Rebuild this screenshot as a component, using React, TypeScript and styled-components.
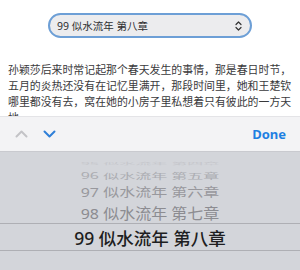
import React from "react";
import styled, { createGlobalStyle } from "styled-components";

const Global = createGlobalStyle`
  html, body { margin: 0; padding: 0; background: #ffffff; }
  body { font-family: "Noto Sans", "Noto Sans CJK SC", sans-serif; }
`;

const Page = styled.div`
  width: 300px;
  height: 270px;
  display: flex;
  flex-direction: column;
  overflow: hidden;
`;

const Content = styled.div`
  flex: 1;
  min-height: 0;
  overflow: hidden;
  padding: 13px 8px 0;
  display: flex;
  flex-direction: column;
  align-items: center;
`;

const SelectBox = styled.div`
  flex: none;
  box-sizing: border-box;
  width: 204px;
  height: 25px;
  border-radius: 13px;
  border: 2.5px solid #6d9fd6;
  background: #ececee;
  display: flex;
  align-items: center;
  justify-content: space-between;
  padding: 0 8px 0 7px;
  font-family: "Noto Sans", "Noto Sans CJK SC", sans-serif;
  font-size: 10.5px;
  color: #2e2e30;
`;

const Paragraph = styled.p`
  flex: none;
  margin: 23px 0 0;
  width: 284px;
  font-size: 10.9px;
  line-height: 16px;
  color: #3a3a3c;
  font-family: "Noto Sans CJK SC", sans-serif;
  text-spacing-trim: space-all;
`;

const Toolbar = styled.div`
  flex: none;
  height: 34px;
  background: #f3f3f5;
  border-top: 1px solid #e4e4e7;
  border-bottom: 1px solid #c9cacf;
  display: flex;
  align-items: center;
  padding: 0 14px 0 15px;
`;

const Arrows = styled.div`
  display: flex;
  align-items: center;
  gap: 15px;
`;

const Done = styled.span`
  margin-left: auto;
  font-family: "Noto Sans", sans-serif;
  font-weight: 700;
  font-size: 13px;
  color: #1e80e2;
`;

const Picker = styled.div`
  flex: none;
  height: 118px;
  background: #d3d5da;
  display: flex;
  flex-direction: column;
  padding-top: 6px;
  box-sizing: border-box;
`;

const Item = styled.div<{ $h: number; $sy: number; $color: string }>`
  flex: none;
  height: ${(p) => p.$h}px;
  display: flex;
  align-items: center;
  justify-content: center;
  font-family: "Noto Sans", "Noto Sans CJK SC", sans-serif;
  font-size: 16px;
  color: ${(p) => p.$color};
  white-space: nowrap;
  & > span {
    display: inline-block;
    transform: scaleY(${(p) => p.$sy});
  }
`;

const Selected = styled.div`
  flex: none;
  height: 28px;
  box-sizing: border-box;
  border-top: 1px solid #aeafb4;
  border-bottom: 1px solid #aeafb4;
  display: flex;
  align-items: center;
  justify-content: center;
  font-family: "Noto Sans", "Noto Sans CJK SC", sans-serif;
  font-size: 17.5px;
  font-weight: 500;
  color: #1e1e21;
`;

const Chevron = ({ up, color }: { up?: boolean; color: string }) => (
  <svg width="13" height="8" viewBox="0 0 13 8">
    <path
      d={up ? "M1.5 6.5 L6.5 1.5 L11.5 6.5" : "M1.5 1.5 L6.5 6.5 L11.5 1.5"}
      fill="none"
      stroke={color}
      strokeWidth="2"
      strokeLinecap="round"
      strokeLinejoin="round"
    />
  </svg>
);

const UpDown = () => (
  <svg width="7" height="10" viewBox="0 0 7 10">
    <path d="M1 3.5 L3.5 1 L6 3.5" fill="none" stroke="#333" strokeWidth="1.2" strokeLinecap="round" strokeLinejoin="round" />
    <path d="M1 6.5 L3.5 9 L6 6.5" fill="none" stroke="#333" strokeWidth="1.2" strokeLinecap="round" strokeLinejoin="round" />
  </svg>
);

const items = [
  { label: "95 似水流年 第四章", h: 10, sy: 0.22, color: "#c6c7cc" },
  { label: "96 似水流年 第五章", h: 14, sy: 0.5, color: "#acadb2" },
  { label: "97 似水流年 第六章", h: 19, sy: 0.78, color: "#98989d" },
  { label: "98 似水流年 第七章", h: 22, sy: 0.93, color: "#8c8c91" },
];

export default function App() {
  return (
    <>
      <Global />
      <Page>
        <Content>
          <SelectBox>
            <span>99 似水流年 第八章</span>
            <UpDown />
          </SelectBox>
          <Paragraph>
            孙颖莎后来时常记起那个春天发生的事情，那是春日时节，五月的炎热还没有在记忆里满开，那段时间里，她和王楚钦哪里都没有去，窝在她的小房子里私想着只有彼此的一方天地。
          </Paragraph>
        </Content>
        <Toolbar>
          <Arrows>
            <Chevron up color="#c3c3c7" />
            <Chevron color="#2f7fd8" />
          </Arrows>
          <Done>Done</Done>
        </Toolbar>
        <Picker>
          {items.map((it) => (
            <Item key={it.label} $h={it.h} $sy={it.sy} $color={it.color}>
              <span>{it.label}</span>
            </Item>
          ))}
          <Selected>99 似水流年 第八章</Selected>
        </Picker>
      </Page>
    </>
  );
}
